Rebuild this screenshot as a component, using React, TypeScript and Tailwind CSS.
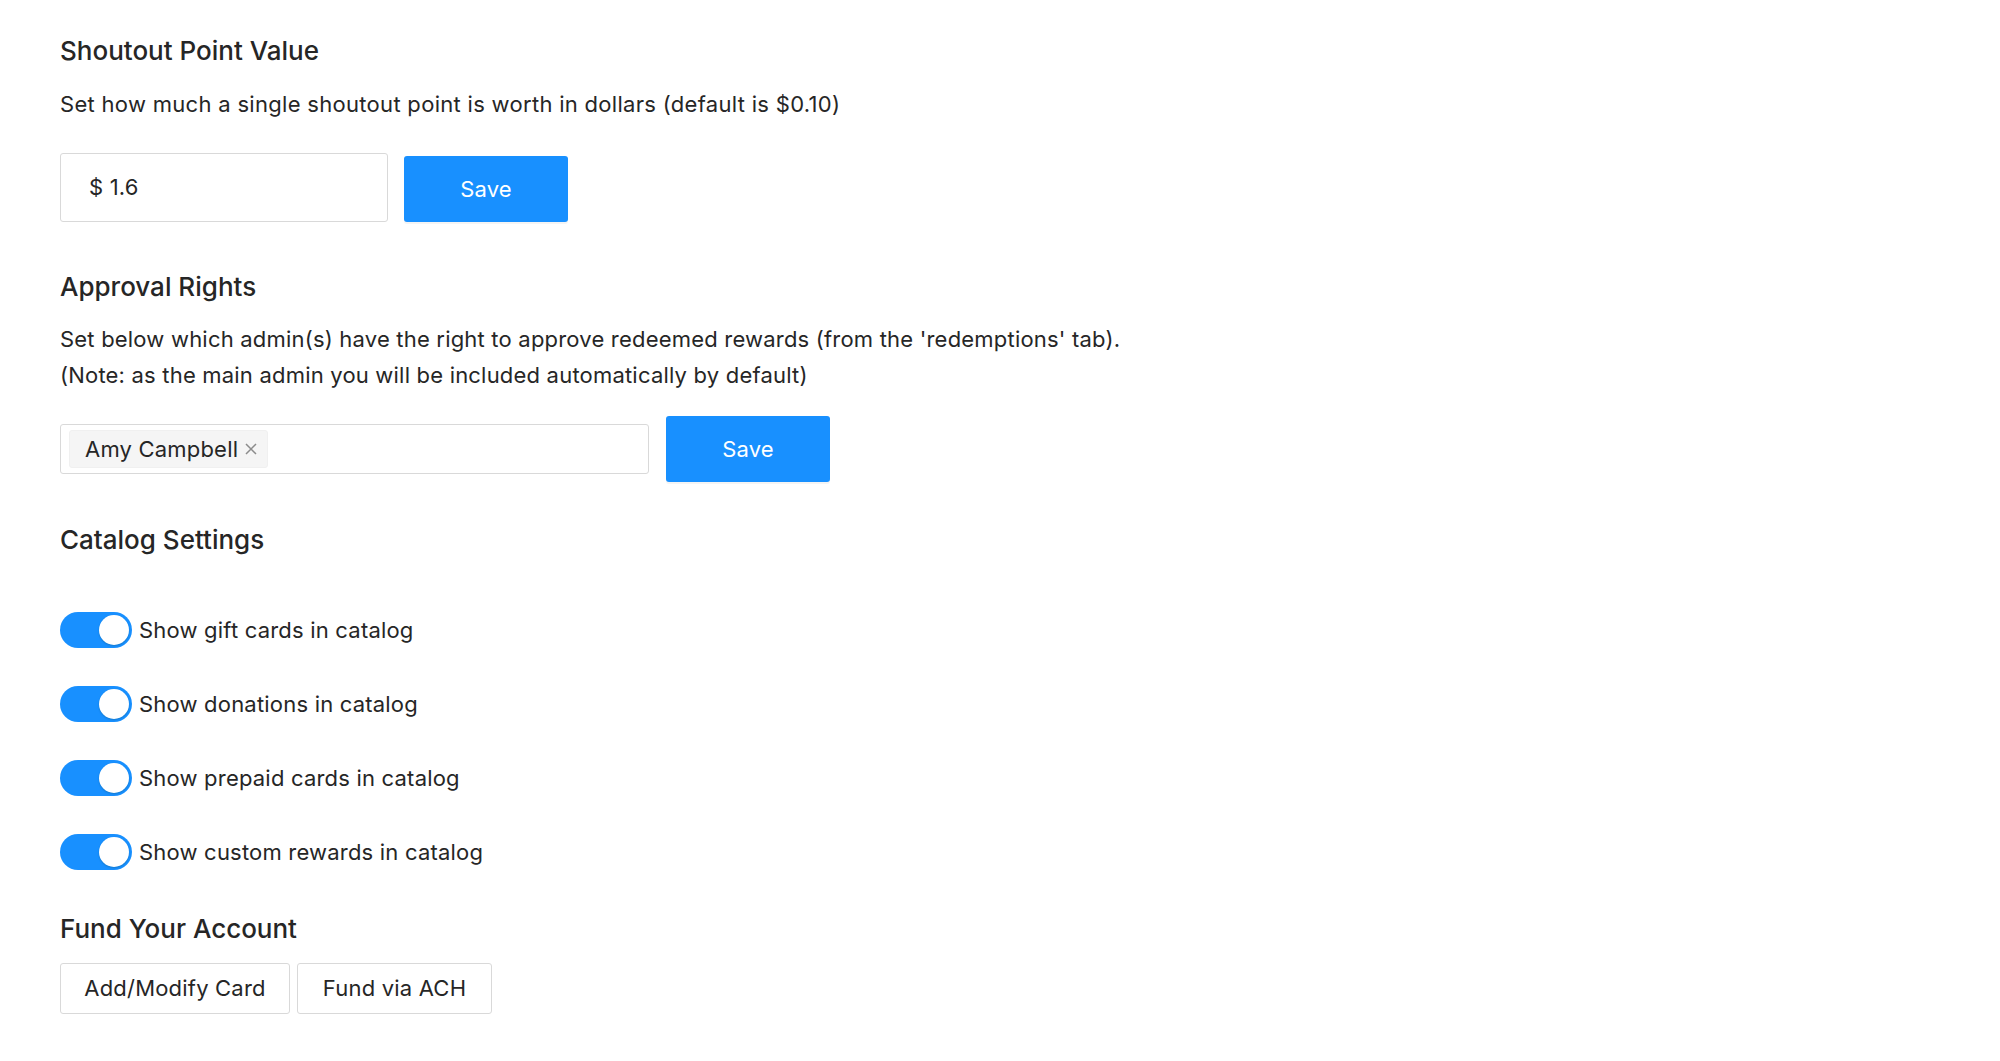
import React from "react";

const font = { fontFamily: "Inter, 'Noto Sans', sans-serif" };

function Toggle() {
  return (
    <div className="relative w-[72px] h-[36px] rounded-full bg-[#1890ff] shrink-0">
      <div className="absolute top-[3px] right-[3px] w-[30px] h-[30px] rounded-full bg-white shadow-[0_1px_2px_rgba(0,35,11,0.2)]" />
    </div>
  );
}

export default function App() {
  const toggles = [
    "Show gift cards in catalog",
    "Show donations in catalog",
    "Show prepaid cards in catalog",
    "Show custom rewards in catalog",
  ];
  return (
    <div className="min-h-[1061px] bg-white text-[#262626] pl-[60px] pt-[35px] tracking-[0.2px]" style={font}>
      <h3 className="text-[26px] leading-[32px] font-medium tracking-[0px]">Shoutout Point Value</h3>
      <p className="mt-[19px] text-[22px] leading-[36px] tracking-[0.3px]">
        Set how much a single shoutout point is worth in dollars (default is $0.10)
      </p>
      <div className="mt-[31px] flex items-end gap-[16px]">
        <div className="w-[328px] h-[69px] border border-[#d9d9d9] rounded-[3px] flex items-center pl-[28px] text-[22px]">
          $ 1.6
        </div>
        <button className="w-[164px] h-[66px] bg-[#1890ff] text-white text-[22px] rounded-[3px] shadow-[0_2px_0_rgba(0,0,0,0.045)]">
          Save
        </button>
      </div>

      <h3 className="mt-[49px] text-[26px] leading-[32px] font-medium tracking-[0px]">Approval Rights</h3>
      <p className="mt-[18px] text-[22px] leading-[36px] tracking-[0.2px]">
        Set below which admin(s) have the right to approve redeemed rewards (from the 'redemptions' tab).
        <br />
        (Note: as the main admin you will be included automatically by default)
      </p>
      <div className="mt-[23px] flex items-center gap-[17px]">
        <div className="w-[589px] h-[50px] border border-[#d9d9d9] rounded-[3px] flex items-center pl-[8px]">
          <div className="h-[38px] bg-[#f5f5f5] border border-[#f0f0f0] rounded-[3px] flex items-center pl-[15px] pr-[9px] text-[22px]">
            <span>Amy Campbell</span>
            <svg width="14" height="14" viewBox="0 0 14 14" className="ml-[6px]">
              <path d="M2 2 L12 12 M12 2 L2 12" stroke="#8c8c8c" strokeWidth="1.5" fill="none" />
            </svg>
          </div>
        </div>
        <button className="w-[164px] h-[66px] bg-[#1890ff] text-white text-[22px] rounded-[3px] shadow-[0_2px_0_rgba(0,0,0,0.045)]">
          Save
        </button>
      </div>

      <h3 className="mt-[42px] text-[26px] leading-[32px] font-medium tracking-[0px]">Catalog Settings</h3>
      <div className="mt-[56px] flex flex-col gap-[38px]">
        {toggles.map((t) => (
          <div key={t} className="flex items-center gap-[7px] h-[36px]">
            <Toggle />
            <span className="text-[22px]">{t}</span>
          </div>
        ))}
      </div>

      <h3 className="mt-[43px] text-[26px] leading-[32px] font-medium tracking-[0px]">Fund Your Account</h3>
      <div className="mt-[18px] flex gap-[7px]">
        <button className="w-[230px] h-[51px] border border-[#d9d9d9] rounded-[3px] bg-white text-[22px]">
          Add/Modify Card
        </button>
        <button className="w-[195px] h-[51px] border border-[#d9d9d9] rounded-[3px] bg-white text-[22px]">
          Fund via ACH
        </button>
      </div>
    </div>
  );
}
